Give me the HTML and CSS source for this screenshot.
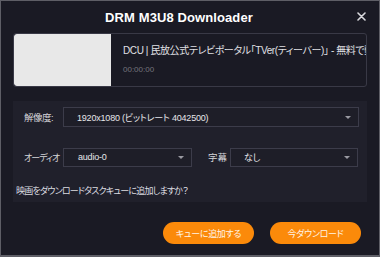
FILE: index.html
```html
<!DOCTYPE html>
<html lang="ja">
<head>
<meta charset="utf-8">
<link rel="stylesheet" href="styles.css">
</head>
<body>
<div class="window">
  <header class="titlebar">
    <h1 class="title">DRM M3U8 Downloader</h1>
    <span class="close">
      <svg width="9" height="9" viewBox="0 0 9 9"><path d="M1 1L8 8M8 1L1 8" stroke="#d8d8dc" stroke-width="1.6" stroke-linecap="round"/></svg>
    </span>
  </header>
  <section class="video">
    <div class="thumb"></div>
    <div class="meta">
      <div class="vtitle">DCU | 民放公式テレビポータル「TVer(ティーバー)」 - 無料で動画見放題</div>
      <div class="vtime">00:00:00</div>
    </div>
  </section>
  <section class="panel">
    <div class="row">
      <label class="lbl">解像度:</label>
      <div class="select wide"><span>1920x1080 (ビットレート 4042500)</span><i class="arrow"></i></div>
    </div>
    <div class="row row2">
      <label class="lbl narrow">オーディオ</label>
      <div class="select audio"><span>audio-0</span><i class="arrow"></i></div>
      <label class="lbl sub">字幕</label>
      <div class="select subs"><span>なし</span><i class="arrow"></i></div>
    </div>
    <p class="question">映画をダウンロードタスクキューに追加しますか？</p>
  </section>
  <footer class="actions">
    <button class="btn">キューに追加する</button>
    <button class="btn">今ダウンロード</button>
  </footer>
</div>
</body>
</html>
```

FILE: styles.css
```css
* { box-sizing: border-box; }
html, body { margin: 0; padding: 0; }
body {
  width: 380px;
  height: 257px;
  background: #1b1b25;
  font-family: "Liberation Sans", "Noto Sans CJK JP", sans-serif;
  font-feature-settings: "palt";
  color: #dcdce0;
}
.window {
  width: 380px;
  height: 257px;
  border: 1px solid #5e5e66;
  border-bottom-width: 2px;
  background: #1a1a24;
  display: flex;
  flex-direction: column;
  padding: 0 12px;
}
.titlebar {
  height: 32px;
  display: flex;
  align-items: center;
  justify-content: center;
  position: relative;
  padding-right: 22px;
}
.title {
  margin: 0;
  font-size: 13px;
  font-weight: bold;
  color: #ffffff;
  padding-top: 1px;
  letter-spacing: 0.1px;
}
.close {
  position: absolute;
  right: 1px;
  top: 11px;
  display: flex;
}
.video {
  height: 54px;
  border: 1px solid #393946;
  border-radius: 3px;
  display: flex;
  overflow: hidden;
}
.thumb {
  width: 97px;
  background: #e8e8e8;
  border-radius: 3px 0 0 3px;
  flex: none;
}
.meta {
  flex: 1;
  min-width: 0;
  padding: 10px 0 0 12px;
  overflow: hidden;
}
.vtitle {
  font-size: 10px;
  letter-spacing: -0.4px;
  white-space: nowrap;
  overflow: hidden;
  color: #e0e0e4;
  line-height: 13px;
}
.vtime {
  margin-top: 8px;
  font-size: 8px;
  color: #74747c;
  line-height: 10px;
}
.panel {
  margin-top: 14px;
  background: #20202b;
  padding: 6px 8px 4px 11px;
  height: 101px;
}
.row {
  display: flex;
  align-items: center;
  height: 20px;
}
.row2 {
  margin-top: 20px;
}
.lbl {
  font-size: 9.5px;
  letter-spacing: -0.5px;
  color: #d6d6da;
  width: 39px;
  flex: none;
  white-space: nowrap;
}
.lbl.narrow {
  font-size: 9px;
  letter-spacing: -1px;
}
.lbl.sub {
  width: auto;
  margin-left: 16px;
  margin-right: 3px;
  letter-spacing: 0;
}
.select {
  height: 20px;
  border: 1px solid #3c3c4a;
  background: #1e1e28;
  display: flex;
  align-items: center;
  padding: 0 6px 0 13px;
  font-size: 9px;
  letter-spacing: -0.2px;
  color: #e6e6ea;
  justify-content: space-between;
  white-space: nowrap;
}
.select.wide { width: 296px; }
.select.audio { width: 129px; height: 19px; padding-left: 14px; }
.select.subs { width: 128px; height: 19px; }
.arrow {
  width: 0;
  height: 0;
  border-left: 3px solid transparent;
  border-right: 3px solid transparent;
  border-top: 3px solid #9a9aa2;
  margin-right: 1px;
}
.question {
  margin: 17px 0 0 -8px;
  font-size: 9px;
  letter-spacing: -0.8px;
  color: #dcdce0;
  line-height: 14px;
  white-space: nowrap;
}
.actions {
  display: flex;
  justify-content: flex-end;
  gap: 16px;
  margin-top: 20px;
  padding-right: 6px;
}
.btn {
  width: 91px;
  height: 22px;
  border: none;
  border-radius: 11px;
  background: #fb8a0a;
  color: #fff4e6;
  font-family: "Liberation Sans", "Noto Sans CJK JP", sans-serif;
  font-feature-settings: "palt";
  font-size: 9px;
  letter-spacing: -0.3px;
  padding: 0;
}
```
